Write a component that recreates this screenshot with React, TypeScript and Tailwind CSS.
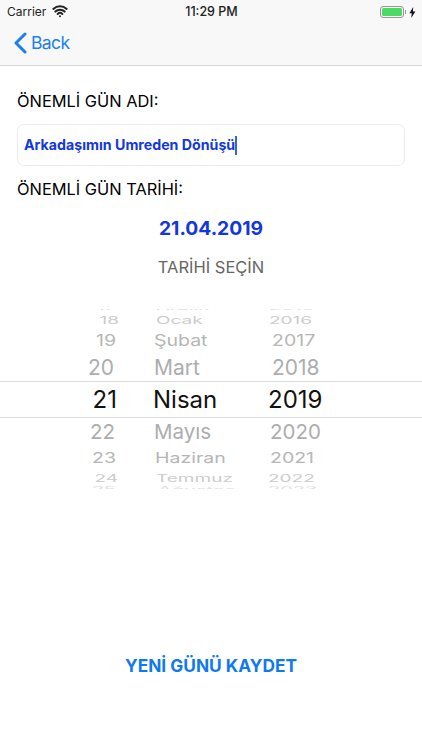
import { Wifi } from "lucide-react";

const rows = [
  { h: "h-[8px]", text: "text-[20px] text-[#dedede] scale-y-[0.35]", dayPr: "pr-[24px]", monPl: "pl-[16px]", yearPl: "pl-[9px]", day: "17", mon: "Aralık", year: "2015" },
  { h: "h-[16px]", text: "text-[19px] text-[#cccccc] scale-y-[0.55]", dayPr: "pr-[21px]", monPl: "pl-[16px]", yearPl: "pl-[9px]", day: "18", mon: "Ocak", year: "2016" },
  { h: "h-[25px]", text: "text-[19.5px] text-[#b6b6b6] scale-y-[0.8]", dayPr: "pr-[24px]", monPl: "pl-[14px]", yearPl: "pl-[12px]", day: "19", mon: "Şubat", year: "2017" },
  { h: "h-[28px]", text: "text-[21px] text-[#adadad]", dayPr: "pr-[26px]", monPl: "pl-[14px]", yearPl: "pl-[12px]", day: "20", mon: "Mart", year: "2018" },
  { h: "h-[37px]", text: "text-[24px] text-[#111111]", dayPr: "pr-[23px]", monPl: "pl-[13px]", yearPl: "pl-[8px]", day: "21", mon: "Nisan", year: "2019" },
  { h: "h-[28px]", text: "text-[20.5px] text-[#adadad]", dayPr: "pr-[25px]", monPl: "pl-[14px]", yearPl: "pl-[10px]", day: "22", mon: "Mayıs", year: "2020" },
  { h: "h-[25px]", text: "text-[19.5px] text-[#b6b6b6] scale-y-[0.75]", dayPr: "pr-[24px]", monPl: "pl-[15px]", yearPl: "pl-[10px]", day: "23", mon: "Haziran", year: "2021" },
  { h: "h-[15px]", text: "text-[19px] text-[#cccccc] scale-y-[0.55]", dayPr: "pr-[22px]", monPl: "pl-[16px]", yearPl: "pl-[8px]", day: "24", mon: "Temmuz", year: "2022" },
  { h: "h-[8px]", text: "text-[20px] text-[#dedede] scale-y-[0.35]", dayPr: "pr-[24px]", monPl: "pl-[18px]", yearPl: "pl-[8px]", day: "25", mon: "Ağustos", year: "2023" },
];

export default function App() {
  return (
    <div className="w-[422px] h-[750px] bg-white overflow-hidden flex flex-col font-['Inter',sans-serif]">
      {/* status + nav */}
      <div className="h-[66px] bg-[#f8f8f8] border-b border-[#d8d8d8] flex flex-col">
        <div className="h-[24px] flex items-center justify-between pl-[7px] pr-[6px] text-[12px] text-[#222222]">
          <div className="flex items-center w-[120px]">
            <span>Carrier</span>
            <Wifi size={16} strokeWidth={3} className="ml-[6px] -mt-[2px]" />
          </div>
          <span className="text-[12.5px] font-medium">11:29 PM</span>
          <div className="w-[120px] flex items-center justify-end">
            <div className="w-[24px] h-[12px] rounded-[3px] border border-[#999999] p-[1px]">
              <div className="w-full h-full rounded-[1.5px] bg-[#4cd964]" />
            </div>
            <div className="w-[1px] h-[4px] bg-[#999999] ml-[1px] mr-[3px]" />
            <svg width="7" height="11" viewBox="0 0 7 11">
              <path d="M4.2 0 0.4 6.2h2.4L2.2 11 6.4 4.4H3.9z" fill="#111111" />
            </svg>
          </div>
        </div>
        <div className="flex-1 flex items-center pl-[13px] pb-[3px] text-[#1a7ff0]">
          <svg width="14" height="22" viewBox="0 0 14 22" fill="none" stroke="currentColor" strokeWidth="3" strokeLinecap="round" strokeLinejoin="round">
            <path d="M12 2 3 11l9 9" />
          </svg>
          <span className="ml-[4px] text-[17.5px] tracking-[-0.6px]">Back</span>
        </div>
      </div>

      <div className="flex flex-col">
        <div className="mt-[24px] pl-[17px] text-[16.4px] leading-[22px] text-black">ÖNEMLİ GÜN ADI:</div>
        <div className="mt-[12px] mx-[17px] h-[42px] border border-[#ececec] rounded-[7px] flex items-center pl-[6px]">
          <span className="text-[14.2px] font-bold text-[#1238dd]">Arkadaşımın Umreden Dönüşü</span>
          <div className="w-[1.5px] h-[19px] bg-[#3a5fe0]" />
        </div>
        <div className="mt-[12px] pl-[17px] text-[16.4px] leading-[22px] text-black">ÖNEMLİ GÜN TARİHİ:</div>
        <div className="mt-[15px] text-center text-[19.3px] leading-[26px] font-bold text-[#1238dd]">21.04.2019</div>
        <div className="mt-[15px] text-center text-[16.5px] leading-[22px] text-[#666666]">TARİHİ SEÇİN</div>
      </div>

      {/* picker */}
      <div className="mt-[31px] h-[180px] overflow-hidden">
        <div className="-mt-[5px] flex flex-col">
          {rows.map((r) => (
            <div key={r.day} className={`flex items-center ${r.h} ${r.day === "21" ? "border-y border-[#dcdcdc]" : ""}`}>
              <div className={`w-[140px] text-right leading-none ${r.dayPr} ${r.text}`}>{r.day}</div>
              <div className={`w-[120px] leading-none ${r.monPl} ${r.text}`}>{r.mon}</div>
              <div className={`flex-1 leading-none ${r.yearPl} ${r.text}`}>{r.year}</div>
            </div>
          ))}
        </div>
      </div>

      <div className="mt-[166px] text-center text-[17.3px] leading-[22px] font-bold text-[#0f7aef]">YENİ GÜNÜ KAYDET</div>
    </div>
  );
}
